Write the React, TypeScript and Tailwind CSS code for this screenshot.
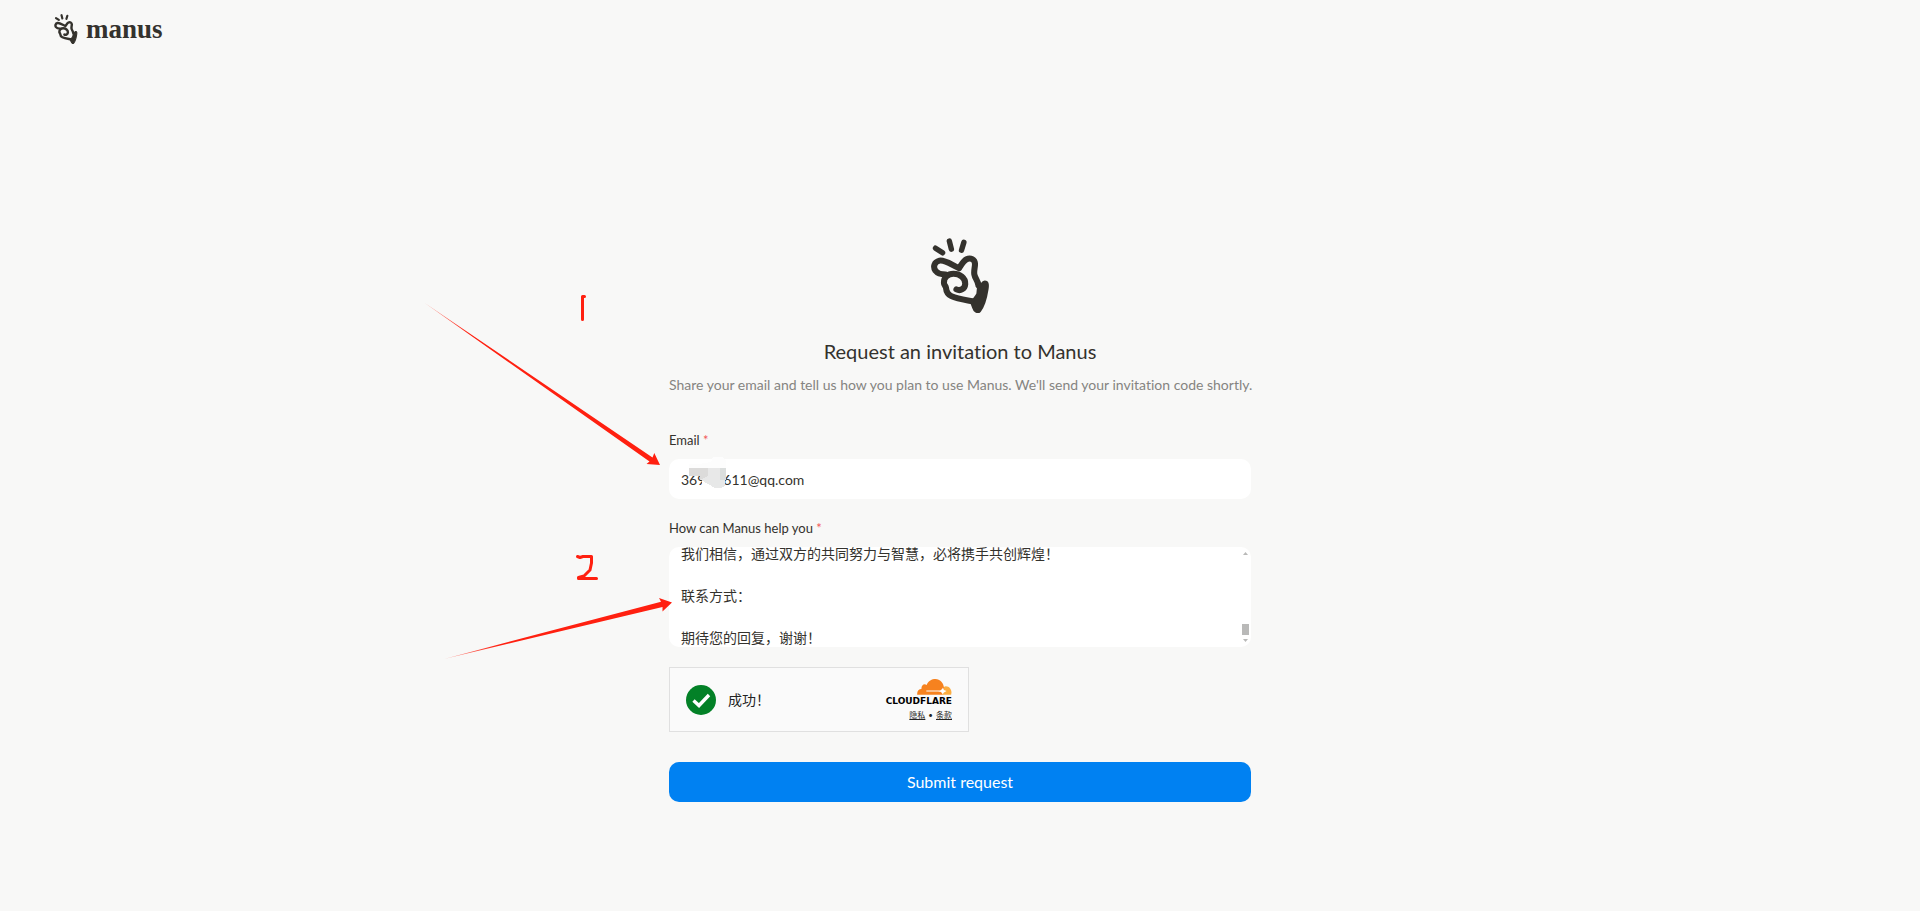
import { useEffect, useRef } from "react";

const MESSAGE = [
  "我们相信，通过双方的共同努力与智慧，必将携手共创辉煌！",
  "",
  "联系方式：",
  "",
  "期待您的回复，谢谢！",
].join("\n");

function HandLogo({ className }: { className: string }) {
  return (
    <svg
      viewBox="61 40 174 222"
      className={className}
      fill="none"
      stroke="#34322d"
      strokeWidth="16"
      strokeLinecap="round"
      strokeLinejoin="round"
      aria-hidden="true"
    >
      <path d="M74 70 L95 84" />
      <path d="M115 49 L121 73" />
      <path d="M158 53 L151 76" />
      <path
        d="M104 148 C92 148 80 145 74 137 C66 125 70 111 86 107 C102 104 124 121 144 129 C150 121 156 108 166 103 C178 97 190 104 191 116 C191 128 187 136 189 148 C191 160 200 166 201 180"
        strokeWidth="18"
      />
      <path
        d="M136 192 C148 198 161 190 162 176 C163 158 146 146 127 146 C111 146 98 157 99 173 C99 180 104 181 105 187 C106 199 109 206 121 212 C140 221 162 223 184 227"
        strokeWidth="18"
      />
      <path
        d="M201 184 C208 185 212 171 220 170 C229 170 229 180 227 192 C223 218 215 243 205 256 C199 263 189 255 186 245 L181 232 C184 224 194 216 199 205 Z"
        fill="#34322d"
        strokeWidth="8"
      />
    </svg>
  );
}

function CloudMark() {
  return (
    <svg viewBox="0 0 106 49" className="h-4 w-[35px]" aria-hidden="true">
      <path
        d="M77 48 C76 36 78 22 88 22 C98 22 105 31 105 42 L104 48 Z"
        fill="#fbad41"
      />
      <path
        d="M0 48 C-1 38 5 31 13 31 C12 20 20 13 29 18 C34 6 45 0 56 0 C70 0 80 11 82 26 C84 34 80 42 77 48 Z"
        fill="#f6821f"
      />
      <path d="M28 35 H68 C74 35 76 31 79 26 L82 34 L90 37 L82 41 L78 47 L73 40 Q70 38 64 38 H28 Z" fill="#fff" />
    </svg>
  );
}

function Annotations() {
  return (
    <svg
      viewBox="419 288 260 376"
      className="pointer-events-none absolute top-[50px] right-full z-10 -mr-[10px] h-[376px] w-[260px]"
      aria-hidden="true"
    >
      <defs>
        <linearGradient id="fade-down" gradientUnits="userSpaceOnUse" x1="424" y1="302" x2="470" y2="334">
          <stop offset="0" stopColor="#ff2010" stopOpacity="0.5" />
          <stop offset="1" stopColor="#ff2010" />
        </linearGradient>
        <linearGradient id="fade-up" gradientUnits="userSpaceOnUse" x1="445" y1="658" x2="500" y2="645">
          <stop offset="0" stopColor="#ff2010" stopOpacity="0.5" />
          <stop offset="1" stopColor="#ff2010" />
        </linearGradient>
      </defs>
      <path
        d="M424 302.5 L652.5 457.5 L654.3 453 L660 465 L646.5 464 L649.5 461.5 Z"
        fill="url(#fade-down)"
      />
      <path
        d="M445 658.7 L661 601.7 L659 598 L672 602.5 L662.5 611.5 L662.5 607 Z"
        fill="url(#fade-up)"
      />
      <g fill="none" stroke="#ff2010" strokeWidth="3" strokeLinecap="round" strokeLinejoin="round">
        <path d="M582.5 319.5 V296.5 H584.5" />
        <path d="M577.5 556.5 L580 557.5 L583 556.5 H591.5 V563 L590 570 L584 576 L578.5 577.5 V578.5 H596.5" />
      </g>
    </svg>
  );
}

function EmailMosaic() {
  return (
    <svg
      viewBox="0 0 38 33"
      className="pointer-events-none absolute -top-[3px] left-5 h-[33px] w-[38px]"
      shapeRendering="crispEdges"
      aria-hidden="true"
    >
      <path d="M13 24 H36 V30 H13 Z" fill="#fff" />
      <path d="M0 12 V8 H10 L22 6 L24 1 H34 L37 5 V12 Z" fill="#fdfdfd" />
      <path d="M0 12 H19 V24 H11 V20 H0 Z" fill="#dcdbda" />
      <path d="M19 12 H31 V24 H11 L19 20 Z" fill="#e8e8e8" />
      <path d="M31 12 H37 V24 H31 Z" fill="#dbdedd" />
      <path d="M12 24 H36 V30 L32 32 H26 L19 28 Z" fill="#e7e8e8" />
    </svg>
  );
}

export default function App() {
  const message = useRef<HTMLTextAreaElement>(null);

  useEffect(() => {
    if (message.current) message.current.scrollTop = 4;
  }, []);

  return (
    <div className="flex min-h-screen flex-col overflow-x-hidden bg-[#f8f8f7] font-[Lato,'Noto_Sans_CJK_SC',sans-serif] text-[#34322d] [font-variant-ligatures:none]">
      <header className="flex h-[58px] items-center px-[54px]">
        <a href="#" className="flex items-center gap-2">
          <HandLogo className="h-[30px] w-6" />
          <span className="font-['Liberation_Serif',serif] text-[27px] leading-8 font-bold">manus</span>
        </a>
      </header>

      <main className="flex flex-1 flex-col items-center px-4 pt-[180px] pb-16">
        <form className="relative flex w-full max-w-[582px] flex-col" onSubmit={(e) => e.preventDefault()}>
          <Annotations />

          <HandLogo className="h-[75px] w-[59px] self-center" />
          <h1 className="mt-[23px] text-center text-xl leading-[30px]">Request an invitation to Manus</h1>
          <p className="mt-[9px] text-center text-sm leading-5 whitespace-nowrap text-[#858481]">
            Share your email and tell us how you plan to use Manus. We'll send your invitation code shortly.
          </p>

          <label htmlFor="email" className="mt-9 text-[13px] leading-[18px]">
            Email <span className="text-[#f25a5a]">*</span>
          </label>
          <div className="relative mt-[10px]">
            <input
              id="email"
              type="text"
              inputMode="email"
              defaultValue="369     611@qq.com"
              className="block h-10 w-full rounded-[10px] bg-white px-3 text-sm outline-none"
            />
            <EmailMosaic />
          </div>

          <label htmlFor="message" className="mt-5 text-[13px] leading-[18px]">
            How can Manus help you <span className="text-[#f25a5a]">*</span>
          </label>
          <div className="relative mt-[10px]">
            <textarea
              id="message"
              ref={message}
              defaultValue={MESSAGE}
              className="block h-[100px] w-full resize-none overflow-hidden rounded-[10px] bg-white px-3 text-sm leading-[21px] outline-none"
            />
            <div
              className="absolute inset-y-[5px] right-[2px] flex w-[7px] flex-col items-center text-[#b9b9b8]"
              aria-hidden="true"
            >
              <svg viewBox="0 0 5 3" className="h-[3px] w-[5px]" fill="currentColor">
                <path d="M0 3 L2.5 0 L5 3 Z" />
              </svg>
              <span className="mt-auto mb-1 h-[11px] w-[7px] bg-[#b9b9b8]" />
              <svg viewBox="0 0 5 3" className="h-[3px] w-[5px]" fill="currentColor">
                <path d="M0 0 H5 L2.5 3 Z" />
              </svg>
            </div>
          </div>

          <div className="mt-5 flex h-[65px] w-[300px] items-center border border-[#e0e0e0] bg-[#fafafa] px-4 text-[#232323]">
            <svg viewBox="0 0 30 30" className="size-[30px]" aria-hidden="true">
              <circle cx="15" cy="15" r="15" fill="#038127" />
              <path d="M7.5 15.5 L13 20.5 L23 10" fill="none" stroke="#fff" strokeWidth="3.4" />
            </svg>
            <span className="ml-3 text-sm leading-5">成功！</span>
            <div className="ml-auto flex flex-col items-end">
              <CloudMark />
              <span className="mt-[2px] font-['DejaVu_Sans',sans-serif] text-[9px] leading-[9px] font-bold text-black">
                CLOUDFLARE
              </span>
              <div className="mt-1 flex gap-[3px] text-[8px] leading-[10px]">
                <a href="#" className="underline">隐私</a>
                <span>•</span>
                <a href="#" className="underline">条款</a>
              </div>
            </div>
          </div>

          <button
            type="submit"
            className="mt-[30px] h-10 w-full cursor-pointer rounded-[10px] bg-[#0081f2] text-base text-white"
          >
            Submit request
          </button>
        </form>
      </main>
    </div>
  );
}
